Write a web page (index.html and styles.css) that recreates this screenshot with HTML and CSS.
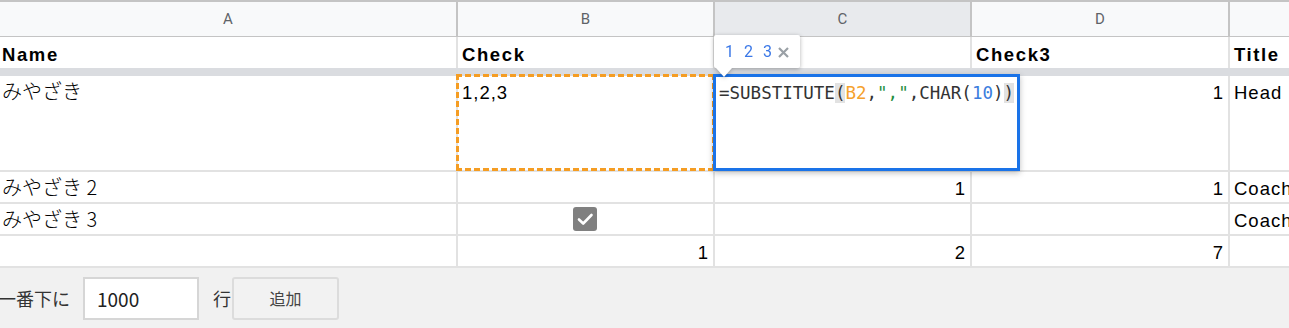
FILE: index.html
```html
<!DOCTYPE html>
<html lang="ja">
<head>
    <meta charset="UTF-8">
    <meta name="viewport" content="width=device-width, initial-scale=1.0">
    <title>Sheet</title>
    <link rel="stylesheet" href="styles.css">
</head>
<body>
    <div class="sheet">
        <div class="row col-heads">
            <div class="ch">A</div>
            <div class="ch">B</div>
            <div class="ch selected">C</div>
            <div class="ch">D</div>
            <div class="ch"></div>
        </div>
        <div class="row title-row">
            <div class="cell first">Name</div>
            <div class="cell">Check</div>
            <div class="cell"></div>
            <div class="cell">Check3</div>
            <div class="cell">Title</div>
        </div>
        <div class="row tall">
            <div class="cell first jp">みやざき</div>
            <div class="cell copied">1,2,3</div>
            <div class="cell editing">
                <div class="editor"><span class="hl">=SUBSTITUTE<span class="paren">(</span><span class="ref">B2</span>,<span class="str">","</span>,CHAR(<span class="lit">10</span>)<span class="paren">)</span></span></div>
                <div class="hint">
                    <span>1</span><span>2</span><span>3</span>
                    <svg class="close" width="11" height="11" viewBox="0 0 11 11"><path d="M1 1L10 10M10 1L1 10" stroke="#9aa0a6" stroke-width="2.2" fill="none"/></svg>
                </div>
            </div>
            <div class="cell num">1</div>
            <div class="cell">Head</div>
        </div>
        <div class="row">
            <div class="cell first jp">みやざき 2</div>
            <div class="cell"></div>
            <div class="cell num">1</div>
            <div class="cell num">1</div>
            <div class="cell">Coach</div>
        </div>
        <div class="row">
            <div class="cell first jp">みやざき 3</div>
            <div class="cell center">
                <span class="checkbox">
                    <svg width="24" height="24" viewBox="0 0 24 24"><path d="M6 12.5L10.2 16.5L18.5 8" stroke="#fff" stroke-width="2.6" fill="none" stroke-linecap="round" stroke-linejoin="round"/></svg>
                </span>
            </div>
            <div class="cell"></div>
            <div class="cell"></div>
            <div class="cell">Coach</div>
        </div>
        <div class="row">
            <div class="cell first"></div>
            <div class="cell num">1</div>
            <div class="cell num">2</div>
            <div class="cell num">7</div>
            <div class="cell"></div>
        </div>
    </div>
    <div class="add-bar">
        <span class="label">一番下に</span>
        <input type="text" class="count" value="1000">
        <span class="label unit">行</span>
        <button class="add-btn">追加</button>
    </div>
</body>
</html>
```
FILE: styles.css
```css
html, body {
    margin: 0;
    height: 100%;
}
body {
    background: #f1f1f1;
    overflow: hidden;
    font-family: "Liberation Sans", "Noto Sans CJK JP", Arial, sans-serif;
}
.sheet {
    background: #fff;
}
.row {
    display: grid;
    grid-template-columns: 456px 255px 255px 256px 1fr;
    column-gap: 2px;
    height: 30px;
    background: #e2e2e2;
    border-bottom: 2px solid #e2e2e2;
}
.col-heads {
    height: 33px;
    background: #c4c4c4;
    border-top: 2px solid #c4c4c4;
    border-bottom: 2px solid #c4c4c4;
}
.ch {
    background: #f8f9fa;
    color: #5f6368;
    font-family: Roboto, "Liberation Sans", sans-serif;
    font-size: 15px;
    line-height: 34px;
    text-align: center;
}
.ch.selected {
    background: #e8eaed;
}
.title-row {
    height: 31px;
    border-bottom: 8px solid #dadce0;
}
.title-row .cell {
    font-weight: bold;
    padding-top: 7px;
    letter-spacing: 1.6px;
}
.tall {
    height: 94px;
}
.tall .cell {
    padding-top: 6px;
}
.cell {
    background: #fff;
    color: #000;
    font-size: 18.5px;
    line-height: 22px;
    letter-spacing: 1px;
    padding: 6px 5px 0 4px;
    white-space: nowrap;
    overflow: hidden;
    min-width: 0;
}
.cell.first {
    padding-left: 2px;
}
.cell.jp {
    font-family: "Noto Sans CJK JP", sans-serif;
    font-size: 20px;
    font-weight: 300;
    letter-spacing: 0;
    padding-top: 4px;
}
.tall .cell.jp {
    padding-top: 4px;
}
.cell.num {
    text-align: right;
    letter-spacing: 0;
}
.cell.center {
    display: flex;
    justify-content: center;
    align-items: center;
    padding: 0;
}
.checkbox {
    width: 24px;
    height: 24px;
    border-radius: 3px;
    background: #808080;
    display: block;
    margin-left: -2px;
}
.checkbox svg {
    display: block;
}

/* copy range marching ants */
.copied {
    position: relative;
    overflow: visible;
}
.copied::after {
    content: "";
    position: absolute;
    left: -2px;
    top: -2px;
    right: -2px;
    bottom: -1px;
    background:
        repeating-linear-gradient(90deg, #f59d23 0 6px, transparent 6px 9px) left top / 100% 3px no-repeat,
        repeating-linear-gradient(90deg, #f59d23 0 6px, transparent 6px 9px) left bottom / 100% 3px no-repeat,
        repeating-linear-gradient(180deg, #f59d23 0 6px, transparent 6px 9px) left top / 3px 100% no-repeat,
        repeating-linear-gradient(180deg, #f59d23 0 6px, transparent 6px 9px) right top / 3px 100% no-repeat;
}

/* in-cell formula editor */
.editing {
    position: relative;
    overflow: visible;
}
.editor {
    position: absolute;
    left: -2px;
    top: -2px;
    width: 307px;
    height: 97px;
    box-sizing: border-box;
    border: 3px solid #1a73e8;
    background: #fff;
    box-shadow: 0 2px 6px rgba(0, 0, 0, 0.25);
    padding: 5px 3px;
    font-family: "DejaVu Sans Mono", "Liberation Mono", monospace;
    font-size: 17.5px;
    line-height: 22px;
    letter-spacing: 0;
    color: #333;
    white-space: pre;
    z-index: 2;
}
.editor .ref {
    color: #f5a12c;
}
.editor .str {
    color: #1e8e3e;
}
.editor .lit {
    color: #3b7ddd;
}
.editor .paren {
    background: #e2e2e2;
}
.hint {
    position: absolute;
    left: -1px;
    top: -41px;
    width: 86px;
    height: 33px;
    box-sizing: border-box;
    background: #fff;
    border-radius: 2px;
    filter: drop-shadow(0 1px 2px rgba(0, 0, 0, 0.3));
    display: flex;
    align-items: center;
    padding-left: 11px;
    gap: 10px;
    font-family: Roboto, "Liberation Sans", sans-serif;
    font-size: 16px;
    letter-spacing: 0;
    color: #3b78e7;
    z-index: 3;
}
.hint::after {
    content: "";
    position: absolute;
    left: 2px;
    bottom: -9px;
    border-left: 8px solid transparent;
    border-right: 8px solid transparent;
    border-top: 9px solid #fff;
}
.hint .close {
    margin-left: -4px;
    margin-top: 1px;
}

/* bottom add-rows bar */
.add-bar {
    height: 60px;
    display: flex;
    align-items: center;
    font-family: "Noto Sans CJK JP", sans-serif;
    font-size: 18px;
    color: #333;
}
.label {
    margin-left: -2px;
}
.count {
    width: 116px;
    height: 43px;
    box-sizing: border-box;
    margin-left: 13px;
    border: 2px solid #d6d6d6;
    background: #fff;
    padding: 0 12px;
    font-family: "Noto Sans CJK JP", sans-serif;
    font-size: 19px;
    color: #222;
    outline: none;
}
.unit {
    margin-left: 14px;
}
.add-btn {
    width: 107px;
    height: 43px;
    border: 2px solid #dcdcdc;
    border-radius: 3px;
    background: #f2f2f2;
    font-family: "Noto Sans CJK JP", sans-serif;
    font-size: 16px;
    color: #444;
    margin-left: 1px;
}
```
